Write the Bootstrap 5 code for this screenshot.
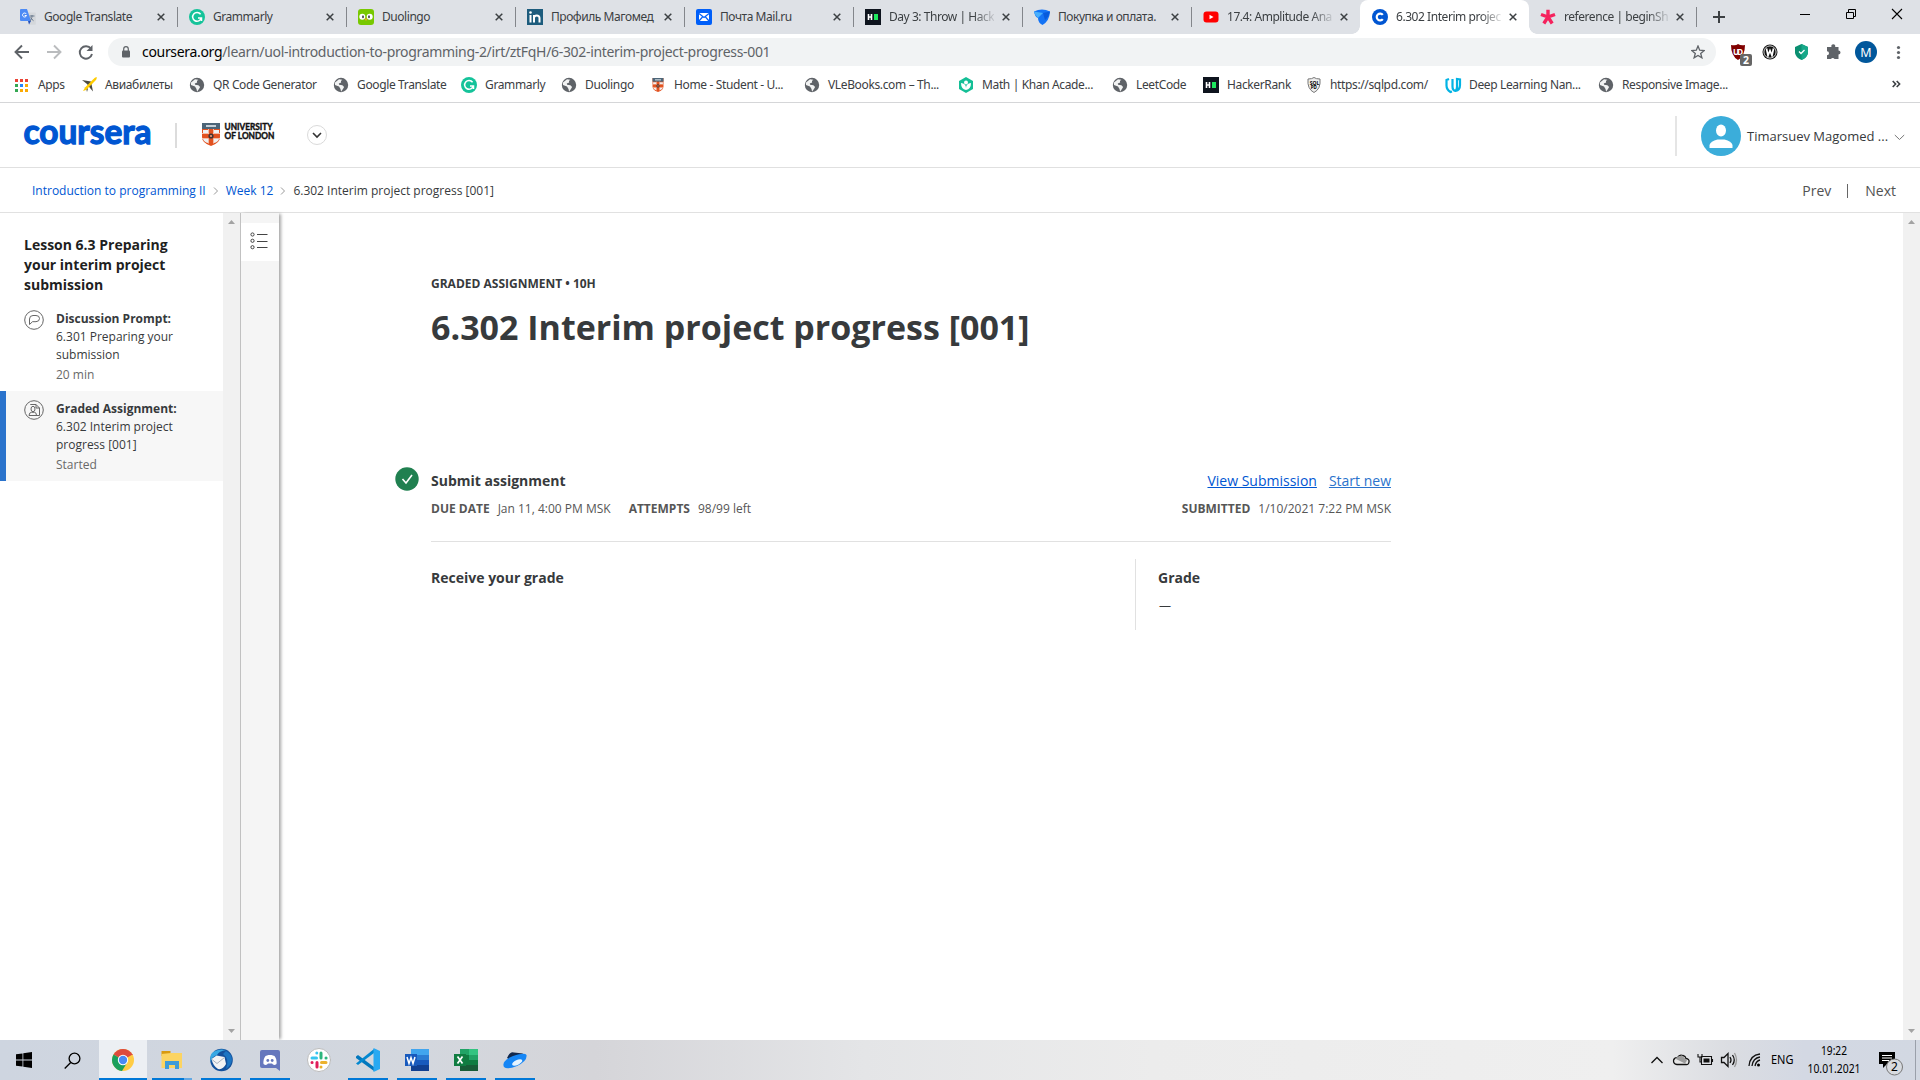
<!DOCTYPE html>
<html lang="en">
<head>
<meta charset="utf-8">
<title>6.302 Interim project progress [001] | Coursera</title>
<link href="https://cdn.jsdelivr.net/npm/bootstrap@5.3.0/dist/css/bootstrap.min.css" rel="stylesheet">
<style>
body{font-family:"Open Sans","Noto Sans",sans-serif;font-size:12px;line-height:18px;color:#373a3c;background:#fff;height:1080px;overflow:hidden}
svg{display:block;flex:none}
a{color:#0056d2}
.chrome-ui{font-family:"Noto Sans","Open Sans",sans-serif;color:#3c4043}
.tabstrip{height:34px;background:#dee1e6;padding-left:8px}
.tab-item{width:169px;height:34px;padding:0 4px 0 12px;position:relative}
.tab-item:nth-of-type(10){width:167px;padding-left:11px}
.tab-item .ttl{margin-left:8px;white-space:nowrap;letter-spacing:-.45px;line-height:34px}
.tab-item .fade-end{-webkit-mask-image:linear-gradient(90deg,#000 80%,rgba(0,0,0,.15) 100%)}
.tab-item:not(.tab-on):not(.no-sep)::after{content:"";position:absolute;right:-1px;top:7px;width:1px;height:20px;background:#83868b}
.tab-on{background:#fff;border-radius:8px 8px 0 0}
.tab-on::before{content:"";position:absolute;bottom:0;left:-8px;right:-8px;height:8px;background:radial-gradient(circle at 0 0,transparent 7.5px,#fff 8px) left/8px 8px no-repeat,radial-gradient(circle at 100% 0,transparent 7.5px,#fff 8px) right/8px 8px no-repeat}
.toolbar{height:36px}
.omni{width:1608px;height:28px;border-radius:14px;background:#f1f3f4;margin-left:13px;padding:0 11px 0 13px;font-size:14px;letter-spacing:-.32px}
.omni-url{margin-left:11px}
.url-rest{color:#5f6368}
.bookbar{height:33px;padding-left:14px;border-bottom:1px solid #d5d6d8}
.bm{height:29px;gap:8px;white-space:nowrap;letter-spacing:-.36px;flex:none}
.bm:nth-child(1){width:67px}.bm:nth-child(2){width:108px}.bm:nth-child(3){width:144px}.bm:nth-child(4){width:128px}
.bm:nth-child(5){width:100px}.bm:nth-child(6){width:89px}.bm:nth-child(7){width:154px}.bm:nth-child(8){width:154px}
.bm:nth-child(9){width:154px}.bm:nth-child(10){width:91px}.bm:nth-child(11){width:103px}.bm:nth-child(12){width:138px}
.bm:nth-child(13){width:154px;gap:7px}.bm:nth-child(14){width:294px}
.more{margin-top:10px}
.site-head{height:65px;border-bottom:1px solid #e0e0e0;padding:0 15px 0 23px}
.uname{width:139px;font-size:13px;white-space:nowrap;padding-top:2px}
.crumbs{height:45px;border-bottom:1px solid #e1e1e1;padding:2px 24px 0 32px}
.crumbs svg{margin:0 7px}
.pn{font-size:14px;color:#525252}
.pn i{width:1px;height:14px;background:#666;margin:0 17px 0 16px}
.work{height:827px}
.side{width:223px;padding-top:22px}
.side h2{font-size:14px;line-height:20px;font-weight:700;color:#1f1f1f;margin:0 40px 6px 24px}
.lesson{height:90px;padding:9px 30px 0 24px;gap:12px}
.lesson.now{background:#f7f7f7;border-left:6px solid #2a73cc;padding-left:18px}
.lesson p{margin:0}
.lesson .meta{color:#696969;margin-top:2px}
.sbar{width:17px;background:#f1f1f1;padding:6px 0}
.rail{width:39px;background:#f5f5f5;border-left:1px solid #c1c1c1;box-shadow:3px 0 3px -1px rgba(0,0,0,.35);padding-top:10px}
.rail-btn{height:38px;background:#fff;padding:0 0 3px 9px}
.page-col{width:960px;margin-left:152px}
.page-col h1{font-size:34px;line-height:40px;font-weight:700;color:#373a3c;margin:14px 0 0;white-space:nowrap}
.cap{font-weight:700;line-height:18px;margin-top:62px}
.step{height:74px;margin-top:120px;margin-left:-36px}
.step-body{padding-top:4px}
.step h3,.grade-row h3{font-size:14px;line-height:20px;font-weight:700;margin:0}
.dim{color:#565656}
.links{gap:12px}
.links a{font-size:14px;line-height:20px}
.links .start-new{color:#2a73cc}
.due{gap:8px;margin-top:9px}
.due-val{margin-right:10px}
.grade-row{border-top:1px solid #e1e1e1}
.grade-row .grade-ttl{padding-top:26px}
.grade-col{width:256px;height:71px;border-left:1px solid #e1e1e1;margin-top:17px;padding:9px 0 0 22px}
.grade-val{margin-top:9px;padding-left:1px;font-size:12px}
.taskbar{height:40px;font-family:"Noto Sans","Open Sans",sans-serif;color:#000;background:linear-gradient(90deg,#ced5e0 0,#d3d7de 22%,#d5d5d9 31%,#e4e5e7 45%,#ececec 60%,#efefef 84%,#dbdde2 90%,#d3d8e3 94%,#d2d8e2 100%)}
.tk{width:49px;height:40px;padding:0 5px 0 4px;position:relative}
.tk.find{padding-right:7px}
.tk.run::after{content:"";position:absolute;left:4px;width:40px;bottom:0;height:2px;background:#0078d7}
.tk.two::after{background:linear-gradient(90deg,#0078d7 32px,#62a8e4 32px)}
.tk.front{background:#eceff3;width:48px;padding:0;margin:0 1px}
.tk.front::after{left:0;width:48px}
</style>
</head>
<body class="d-flex flex-column">
<svg width="0" height="0" class="position-absolute">
<defs>
<symbol id="globe" viewBox="0 0 16 16"><circle cx="8" cy="8" r="7.200" fill="#5f6368"/><path d="M2 5.500 6 2.200l3.200.5-.4 2.500-3 1.200.3 1.400 3.300.5 1.700 1.800-1 1.700-2 3L7.500 12 6 9.500 2 8z" fill="#fff" opacity=".92"/><path d="m8 3.500 4.500-.2L14 7l-3.500.5-2.500-2z" fill="#5f6368"/></symbol>
<symbol id="gram" viewBox="0 0 16 16"><circle cx="8" cy="8" r="8" fill="#15c39a"/><path d="M11.600 5.300A4.400 4.400 0 1 0 12.300 9H9M12.500 8.500v3.500" fill="none" stroke="#fff" stroke-width="1.500"/></symbol>
<symbol id="hrank" viewBox="0 0 16 16"><path d="M0 0h16v16H0z" fill="#0e141e"/><path d="M3.500 5v6M6.500 5v6M3.500 8h3" stroke="#fff" stroke-width="1.600"/><path d="M9 5h4v6H9z" fill="#1ee75e"/></symbol>
<symbol id="crest" viewBox="0 0 18 23"><path d="M0 0h18v14q0 6-9 9-9-3-9-9z" fill="#e2511f"/><path d="M0 0h18v6H0z" fill="#4c6578"/><path d="M4 2h10v2H4z" fill="#c6d0d8"/><path d="M1 7h5v3H1zM12 7h5v3h-5zM1 16h5v4q-4-1-5-4zM17 16h-5v4q4-1 5-4z" fill="#eef1f3"/><path d="M6.500 6v5M11.500 6v5M0 10.500h6.500M11.500 10.500H18M0 15.500h6.500v5M18 15.500h-6.500v5" stroke="#f8d5c8" fill="none" stroke-width=".8"/><circle cx="9" cy="13" r="2.600" fill="#403535"/><circle cx="9" cy="13" r="1.100" fill="#f39c76"/></symbol>
<symbol id="x" viewBox="0 0 8 8"><path d="m.7.7 6.600 6.600M7.300.7.700 7.300" stroke="#3c4043" stroke-width="1.500"/></symbol>
<symbol id="sep" viewBox="0 0 6 8"><path d="m1 .5 3.500 3.500L1 7.500" fill="none" stroke="#999" /></symbol>
</defs></svg>

<header class="chrome-ui">
<div class="tabstrip d-flex">
 <div class="tab-item d-flex align-items-center"><svg width="16" height="16" viewBox="0 0 16 16"><path d="M6 3.500h9q.8 0 .8 1V15q0 .8-.8.8H9z" fill="#d4d7db"/><path d="M1 0h6l4 12H1q-1 0-1-1V1q0-1 1-1z" fill="#4d8bf5"/><path d="m8 12 3 0-2 3.500z" fill="#2450b8"/><path d="M9.500 7h5M12 6v1c0 2-1 4-2 5M10.500 8.500c1 1.500 2 2.500 3 3.200" stroke="#68788c" fill="none"/><path d="M6.300 5A2 2 0 1 0 6.500 6.500H4.700" fill="none" stroke="#fff"/></svg><span class="ttl">Google Translate</span><svg class="ms-auto me-2" width="8" height="8"><use href="#x"/></svg></div>
 <div class="tab-item d-flex align-items-center"><svg width="16" height="16"><use href="#gram"/></svg><span class="ttl">Grammarly</span><svg class="ms-auto me-2" width="8" height="8"><use href="#x"/></svg></div>
 <div class="tab-item d-flex align-items-center"><svg width="16" height="16" viewBox="0 0 16 16"><rect width="16" height="16" rx="3" fill="#78c800"/><circle cx="4.300" cy="7.700" r="3" fill="#fff"/><circle cx="11.700" cy="7.700" r="3" fill="#fff"/><ellipse cx="5" cy="7.700" rx="1" ry="1.500" fill="#4b4b4b"/><ellipse cx="11" cy="7.700" rx="1" ry="1.500" fill="#4b4b4b"/><path d="m6.500 9.500h3L8 12z" fill="#f5a623"/></svg><span class="ttl">Duolingo</span><svg class="ms-auto me-2" width="8" height="8"><use href="#x"/></svg></div>
 <div class="tab-item d-flex align-items-center"><svg width="16" height="16" viewBox="0 0 16 16"><path d="M0 0h16v16H0z" fill="#1d5c7d"/><path d="M3.500 6v7.500M7 13.500V6M7 9c0-3 5.500-3.500 5.500 0v4.500" fill="none" stroke="#fff" stroke-width="2"/><circle cx="3.500" cy="3.500" r="1.300" fill="#fff"/></svg><span class="ttl">Профиль Магомед</span><svg class="ms-auto me-2" width="8" height="8"><use href="#x"/></svg></div>
 <div class="tab-item d-flex align-items-center"><svg width="16" height="16" viewBox="0 0 16 16"><rect width="16" height="16" rx="2" fill="#005ff9"/><rect x="3" y="4" width="10" height="8" fill="#fff"/><path d="m3 4.500 5 4 5-4M3 12l3.500-4M13 12 9.500 8" fill="none" stroke="#005ff9" stroke-width="1.200"/></svg><span class="ttl">Почта Mail.ru</span><svg class="ms-auto me-2" width="8" height="8"><use href="#x"/></svg></div>
 <div class="tab-item d-flex align-items-center"><svg width="16" height="16"><use href="#hrank"/></svg><span class="ttl fade-end">Day 3: Throw | Hack</span><svg class="ms-auto me-2" width="8" height="8"><use href="#x"/></svg></div>
 <div class="tab-item d-flex align-items-center"><svg width="16" height="16" viewBox="0 0 16 16"><path d="M0 2.500Q8-1.500 16 2.500 15.500 12 8.500 16 4 14 4 9 1 8 0 2.500z" fill="#1373f5"/><path d="M0 2.500 9 4 4 9Q1 7 0 2.500z" fill="#4ab0fb"/><path d="m9 4 7-1.500Q15 8 11 11z" fill="#075bdc"/></svg><span class="ttl">Покупка и оплата.</span><svg class="ms-auto me-2" width="8" height="8"><use href="#x"/></svg></div>
 <div class="tab-item no-sep d-flex align-items-center"><svg width="16" height="16" viewBox="0 0 16 16"><rect x=".5" y="2.500" width="15" height="11" rx="3" fill="#f00"/><path d="m6.500 5.700 4 2.300-4 2.300z" fill="#fff"/></svg><span class="ttl fade-end">17.4: Amplitude Ana</span><svg class="ms-auto me-2" width="8" height="8"><use href="#x"/></svg></div>
 <div class="tab-item tab-on d-flex align-items-center"><svg width="16" height="16" viewBox="0 0 16 16"><circle cx="8" cy="8" r="8" fill="#0056d2"/><path d="M10.800 5.900a3.400 3.400 0 1 0 0 4.200" fill="none" stroke="#fff" stroke-width="2.200"/></svg><span class="ttl fade-end">6.302 Interim projec</span><svg class="ms-auto me-2" width="8" height="8"><use href="#x"/></svg></div>
 <div class="tab-item d-flex align-items-center"><svg width="16" height="16" viewBox="0 0 16 16"><path d="M8 8V.8M8 8l7-2.500M8 8l4.200 6.500M8 8l-4.200 6.500M8 8 1 5.500" stroke="#f5225d" stroke-width="3.400"/></svg><span class="ttl fade-end">reference | beginSh</span><svg class="ms-auto me-2" width="8" height="8"><use href="#x"/></svg></div>
 <svg class="ms-auto" width="222" height="34" viewBox="1698 0 222 34" fill="none" stroke="#3c4043"><path d="M1713 17h12M1719 11v12" stroke-width="2"/><path d="M1800 14.500h10" stroke="#000"/><path d="M1846.500 12.500h7v6h-7zM1848.500 12.500v-3h7v7h-2" stroke="#000"/><path d="m1892 9 10 10m0-10-10 10" stroke="#000" stroke-width="1.100"/></svg>
</div>
<div class="toolbar d-flex align-items-center">
 <svg width="95" height="36" viewBox="0 34 95 36" fill="none" stroke-width="1.900"><path d="M29 52H16m6-6.500L15.500 52l6.500 6.500" stroke="#5f6368"/><path d="M47 52h13m-6-6.500 6.500 6.500-6.500 6.500" stroke="#babcbe"/><path d="M91 48.800A6.200 6.200 0 1 0 92 54" stroke="#5f6368"/><path d="M92.500 45v6h-6z" fill="#5f6368"/></svg>
 <div class="omni d-flex align-items-center"><svg width="10" height="13" viewBox="0 0 10 13"><rect x="1" y="4.500" width="8" height="7" rx="1" fill="#5f6368"/><path d="M2.700 5V3a2.300 2.300 0 0 1 4.600 0v2" fill="none" stroke="#5f6368" stroke-width="1.200"/></svg><span class="omni-url"><span class="text-black">coursera.org</span><span class="url-rest">/learn/uol-introduction-to-programming-2/irt/ztFqH/6-302-interim-project-progress-001</span></span>
 <svg class="ms-auto" width="14" height="14" viewBox="0 0 14 14"><path d="m7 1 1.700 4.200 4.500.3-3.500 2.900 1.200 4.400L7 10.400l-3.900 2.400 1.200-4.400L.8 5.500l4.500-.3z" fill="none" stroke="#5f6368" stroke-width="1.300"/></svg></div>
 <svg width="204" height="36" viewBox="1716 34 204 36"><path d="M1731 45q5 1 7-1 3 2 7 1 0 11-7 15-7-4-7-15z" fill="#800000"/><text x="1733" y="54.500" font-size="8" font-weight="700" fill="#fff" textLength="10">UD</text><rect x="1740" y="54" width="12" height="12" rx="2" fill="#666"/><text x="1743" y="64" font-size="10.500" font-weight="700" fill="#fff">2</text><circle cx="1770" cy="52" r="7.500" fill="#111"/><circle cx="1770" cy="52" r="6.100" fill="none" stroke="#fff" stroke-width=".8"/><path d="m1766.500 48.500 1.500 7 2-5 2 5 1.500-7" fill="none" stroke="#fff" stroke-width="1.700"/><path d="m1801.500 44 6.500 3v6q-1 5-6.500 7-5.500-2-6.500-7v-6z" fill="#0b8f71"/><path d="m1801.500 44 6.500 3v6q-1 5-6.500 7z" fill="#17a889"/><path d="m1799 51.500 2 2 3.500-3.500" fill="none" stroke="#fff" stroke-width="1.300"/><path d="M1828 47h3.500a2 2 0 1 1 3.600 0h3.400v3.600a2 2 0 1 1 0 4V59h-4a2 2 0 0 0-3.500 0h-4v-3.800a2 2 0 1 0 0-4V47z" fill="#5f6368"/><circle cx="1866" cy="52" r="11" fill="#01579b"/><text x="1866" y="56.500" font-size="12.500" text-anchor="middle" fill="#fff">M</text><g fill="#5f6368"><circle cx="1898.500" cy="47.500" r="1.600"/><circle cx="1898.500" cy="52.500" r="1.600"/><circle cx="1898.500" cy="57.500" r="1.600"/></g></svg>
</div>
<nav class="bookbar d-flex">
 <div class="bm d-flex align-items-center"><svg width="16" height="16" viewBox="0 0 16 16"><path d="M1 2h3v3H1zM6 2h3v3H6zM11 2h3v3h-3z" fill="#ea4335"/><path d="M1 7h3v3H1zM1 12h3v3H1z" fill="#34a853"/><path d="M6 7h3v3H6z" fill="#2684fc"/><path d="M11 7h3v3h-3zM6 12h3v3H6zM11 12h3v3h-3z" fill="#fbaa05"/></svg>Apps</div>
 <div class="bm d-flex align-items-center"><svg width="16" height="16" viewBox="0 0 16 16"><path d="m1 3 9 1.500 2 10-3-3.500-3-4z" fill="#4a4a42"/><path d="M1 9.500 5 11l1 4 1-3.500z" fill="#4a4a42"/><path d="M15.500 0q1 2-2 4.500L5 13l-3 1 2-3.500 8-8Q14 0 15.500 0z" fill="#fc0"/></svg>Авиабилеты</div>
 <div class="bm d-flex align-items-center"><svg width="16" height="16"><use href="#globe"/></svg>QR Code Generator</div>
 <div class="bm d-flex align-items-center"><svg width="16" height="16"><use href="#globe"/></svg>Google Translate</div>
 <div class="bm d-flex align-items-center"><svg width="16" height="16"><use href="#gram"/></svg>Grammarly</div>
 <div class="bm d-flex align-items-center"><svg width="16" height="16"><use href="#globe"/></svg>Duolingo</div>
 <div class="bm d-flex align-items-center"><svg width="16" height="14"><use href="#crest"/></svg>Home - Student - U...</div>
 <div class="bm d-flex align-items-center"><svg width="16" height="16"><use href="#globe"/></svg>VLeBooks.com – Th...</div>
 <div class="bm d-flex align-items-center"><svg width="16" height="16" viewBox="0 0 16 16"><path d="m8 0 7 4v8l-7 4-7-4V4z" fill="#14bf96"/><circle cx="8" cy="5.500" r="2" fill="#fff"/><path d="M3 6q5 .5 5 5 0-4.500 5-5 0 6-5 7-5-1-5-7z" fill="#fff"/></svg>Math | Khan Acade...</div>
 <div class="bm d-flex align-items-center"><svg width="16" height="16"><use href="#globe"/></svg>LeetCode</div>
 <div class="bm d-flex align-items-center"><svg width="16" height="16"><use href="#hrank"/></svg>HackerRank</div>
 <div class="bm d-flex align-items-center"><svg width="16" height="16" viewBox="0 0 16 16"><path d="M2 2q4 0 6-1.500Q10 2 14 2q1 10-6 13.500Q1 12 2 2z" fill="#eee" stroke="#777"/><text x="3.700" y="7.500" font-size="5" font-weight="700" letter-spacing="0">SQL</text><text x="4.700" y="12" font-size="4.500" font-weight="700" letter-spacing="0">PD</text></svg>https://sqlpd.com/</div>
 <div class="bm d-flex align-items-center"><svg width="18" height="18" viewBox="0 0 18 18" fill="none" stroke="#02b3e4" stroke-width="2.200"><path d="M5 3 2.500 4v5.500q0 4 4 6.500l1.500-.5M8.500 3v7.500q0 4 3 4.500 4.500-1 4.500-6V3.500L13 3v8q0 3-2 4"/></svg>Deep Learning Nan...</div>
 <div class="bm d-flex align-items-center"><svg width="16" height="16"><use href="#globe"/></svg>Responsive Image...</div>
 <svg class="more" width="9" height="8" viewBox="0 0 9 8" fill="none" stroke="#3c4043" stroke-width="1.600"><path d="M.7 1 3.600 4 .7 7M4.700 1l2.900 3-2.900 3"/></svg>
</nav>
</header>

<div class="site-head d-flex align-items-center">
 <svg width="320" height="64" viewBox="23 103 320 64"><text x="23.500" y="144" font-family="Lato" font-weight="700" font-size="35" fill="#0056d2" stroke="#0056d2" stroke-width="1.300" textLength="128" lengthAdjust="spacingAndGlyphs">coursera</text><path d="M176 123v25" stroke="#dcdcdc" stroke-width="2"/><use href="#crest" x="202" y="123" width="18" height="23"/><g font-family="Lato" font-weight="700" font-size="8.500" fill="#111" stroke="#111" stroke-width=".4"><text x="224.500" y="130" textLength="48" lengthAdjust="spacingAndGlyphs">UNIVERSITY</text><text x="224.500" y="139" textLength="50" lengthAdjust="spacingAndGlyphs">OF LONDON</text></g><circle cx="317" cy="135" r="9.500" fill="#fff" stroke="#dadada"/><path d="m313 133 4 4 4-4" fill="none" stroke="#333" stroke-width="1.600"/></svg>
 <div class="ms-auto d-flex align-items-center">
  <svg width="72" height="64" viewBox="1675 103 72 64"><path d="M1676 116v40" stroke="#dcdcdc" stroke-width="1.500"/><circle cx="1721" cy="136" r="20" fill="#3badda"/><ellipse cx="1721" cy="130.500" rx="5" ry="6" fill="#fff"/><path d="M1709.500 148v-3q1-4 8-5.500h7q7 1.500 8 5.500v3z" fill="#fff"/></svg>
  <span class="uname">Timarsuev Magomed ...</span>
  <svg class="ms-2 mt-1" width="11" height="7" viewBox="0 0 11 7"><path d="m.8 1 4.700 4.500L10.200 1" fill="none" stroke="#777"/></svg>
 </div>
</div>
<nav class="crumbs d-flex align-items-center">
 <a class="text-decoration-none" href="#">Introduction to programming II</a><svg width="6" height="8"><use href="#sep"/></svg>
 <a class="text-decoration-none" href="#">Week 12</a><svg width="6" height="8"><use href="#sep"/></svg><span>6.302 Interim project progress [001]</span>
 <div class="ms-auto d-flex align-items-center pn"><span>Prev</span><i></i><span>Next</span></div>
</nav>

<div class="work d-flex">
 <aside class="side">
  <h2>Lesson 6.3 Preparing your interim project submission</h2>
  <div class="lesson d-flex"><svg width="20" height="20" viewBox="0 0 20 20" fill="none" stroke="#666"><circle cx="10" cy="10" r="9.300"/><path d="M5.500 14.500V9q0-3.500 3.500-3.500h3q3.500 0 3.500 3t-3.500 3.200H8.500z"/></svg><div><p class="fw-bold">Discussion Prompt:</p><p>6.301 Preparing your submission</p><p class="meta">20 min</p></div></div>
  <div class="lesson now d-flex"><svg width="20" height="20" viewBox="0 0 20 20" fill="none" stroke="#666"><circle cx="10" cy="10" r="9.300"/><path d="M6.500 5V4.500H12l3.500 3.500v7.500H12M12 4.500V8h3.500"/><ellipse cx="9" cy="9" rx="2" ry="2.700"/><path d="M5 15.500q0-3 2.500-3.200h3q2 .2 2 3.200z"/></svg><div><p class="fw-bold">Graded Assignment:</p><p>6.302 Interim project progress [001]</p><p class="meta">Started</p></div></div>
 </aside>
 <div class="sbar d-flex flex-column justify-content-between align-items-center"><svg width="7" height="6"><path d="M0 5h7L3.500 1z" fill="#a3a3a3"/></svg><svg width="7" height="6"><path d="M0 1h7L3.500 5z" fill="#a3a3a3"/></svg></div>
 <div class="rail"><div class="rail-btn d-flex align-items-center"><svg width="18" height="18" viewBox="0 0 18 18" fill="none" stroke="#444"><circle cx="2.500" cy="2.500" r="1.600"/><circle cx="2.500" cy="8.800" r="1.600"/><circle cx="2.500" cy="15.200" r="1.600"/><path d="M7 2.500h10.500M7 9.500h10.500M7 15.500h10.500"/></svg></div></div>
 <main class="page-col">
  <div class="cap">GRADED ASSIGNMENT • 10H</div>
  <h1>6.302 Interim project progress [001]</h1>
  <section class="step d-flex">
   <svg width="36" height="24" viewBox="0 0 36 24"><circle cx="12" cy="12" r="11.700" fill="#208050"/><path d="m7.500 12 3.500 4 6-8" fill="none" stroke="#fff" stroke-width="1.600"/></svg>
   <div class="step-body flex-grow-1">
    <div class="d-flex justify-content-between"><h3>Submit assignment</h3><div class="links d-flex"><a href="#">View Submission</a><a class="start-new" href="#">Start new</a></div></div>
    <div class="d-flex dim due"><b>DUE DATE</b><span class="due-val">Jan 11, 4:00 PM MSK</span><b>ATTEMPTS</b><span>98/99 left</span><b class="ms-auto">SUBMITTED</b><span>1/10/2021 7:22 PM MSK</span></div>
   </div>
  </section>
  <section class="grade-row d-flex justify-content-between">
   <h3 class="grade-ttl">Receive your grade</h3>
   <div class="grade-col"><h3>Grade</h3><div class="grade-val">—</div></div>
  </section>
 </main>
 <div class="sbar ms-auto d-flex flex-column justify-content-between align-items-center"><svg width="7" height="6"><path d="M0 5h7L3.500 1z" fill="#a3a3a3"/></svg><svg width="7" height="6"><path d="M0 1h7L3.500 5z" fill="#a3a3a3"/></svg></div>
</div>

<footer class="taskbar d-flex">
 <div class="tk d-flex align-items-center justify-content-center"><svg width="16" height="16" viewBox="0 0 16 16"><path d="m0 2.300 6.500-.9v6.200H0zM7.300 1.300 16 0v7.600H7.300zM0 8.400h6.500v6.200L0 13.700zM7.300 8.400H16V16l-8.700-1.300z"/></svg></div>
 <div class="tk find d-flex align-items-center justify-content-center"><svg width="17" height="17" viewBox="0 0 17 17" fill="none" stroke="#000" stroke-width="1.300"><circle cx="10.500" cy="6.500" r="5.400"/><path d="M6.700 10.500.7 16.500"/></svg></div>
 <div class="tk run front d-flex align-items-center justify-content-center"><svg width="22" height="22" viewBox="0 0 22 22"><circle cx="11" cy="11" r="11" fill="#fc4"/><path d="M11 11 1.500 5.500a11 11 0 0 1 19 0z" fill="#dd4b3e"/><path d="M11 11 1.500 5.500A11 11 0 0 0 10 22l5.500-9z" fill="#1a9f5c"/><path d="M11 5.500h9.500" stroke="#dd4b3e"/><circle cx="11" cy="11" r="5.200" fill="#fff"/><circle cx="11" cy="11" r="4.200" fill="#4a8af4"/></svg></div>
 <div class="tk run two d-flex align-items-center justify-content-center"><svg width="22" height="20" viewBox="0 0 22 20"><path d="M.5 1h9v5h-9z" fill="#d99a10"/><path d="M.5 4 10 3h11v15H.5z" fill="#fcd462"/><path d="M4 19v-8h14v8h-4v-4H8v4z" fill="#3d9bd9"/></svg></div>
 <div class="tk run d-flex align-items-center justify-content-center"><svg width="24" height="24" viewBox="0 0 24 24"><circle cx="12.500" cy="12" r="11.300" fill="#14519c"/><path d="M3 5q6-5 14-3-7 1-9 5Q2 9 2 14 0 9 3 5z" fill="#38a8e4"/><path d="m2.500 11 5-3.500 8 1.500 1.500 7q-3 6-8 5-5-3-6.500-10z" fill="#f3f3f4"/><path d="m3 11.500 5 4 7.500-6" fill="none" stroke="#a9b3bf"/><path d="M17 3q6 3 6 9-1 6-6 9 4-10-3-15z" fill="#1c75c3"/></svg></div>
 <div class="tk run d-flex align-items-center justify-content-center"><svg width="20" height="21" viewBox="0 0 20 21"><path d="M2 0h16q2 0 2 2v19l-4-3H2q-2 0-2-2V2q0-2 2-2z" fill="#6577bd"/><path d="M3.500 14Q3 9 5.500 6l3-1h3l3 1q2.500 3 2 8-2 1.500-3.500.5L12 13.500H8l-1 1q-1.500 1-3.500-.5z" fill="#fff"/><circle cx="7.800" cy="10.500" r="1.400" fill="#6577bd"/><circle cx="12.200" cy="10.500" r="1.400" fill="#6577bd"/></svg></div>
 <div class="tk d-flex align-items-center justify-content-center"><svg width="24" height="24" viewBox="0 0 24 24" fill="none" stroke-width="3" stroke-linecap="round"><circle cx="12" cy="12" r="11.500" fill="#fff" stroke="#bbb" stroke-width="1"/><path d="M5 10h4.500M9.800 5v.1" stroke="#36c5f0"/><path d="M14 5v5M19 10h.1" stroke="#2eb67d"/><path d="M14.500 14.500H19M14 19v-.1" stroke="#ecb22e"/><path d="M10 14.500V19M5 14.500h.1" stroke="#e01e5a"/></svg></div>
 <div class="tk run d-flex align-items-center justify-content-center"><svg width="24" height="24" viewBox="0 0 24 24"><path d="M0 8.500 2 7l16 12v4L0 10z" fill="#0277bd"/><path d="M0 15.500 2 17 18 5V1z" fill="#0288d1"/><path d="m17.500 0 6.500 3v18l-6.500 3z" fill="#29a9f2"/></svg></div>
 <div class="tk run d-flex align-items-center justify-content-center"><svg width="24" height="22" viewBox="0 0 24 22"><path d="M6 0h18v6H6z" fill="#41a5ee"/><path d="M6 6h18v5H6z" fill="#2b7cd3"/><path d="M6 11h18v5H6z" fill="#185abd"/><path d="M6 16h18v6H6z" fill="#103f91"/><path d="M0 5h12v12H0z" fill="#185abd"/><path d="m2 8 2 6.500L6 8.500l2 6L10 8" fill="none" stroke="#fff" stroke-width="1.500"/></svg></div>
 <div class="tk run d-flex align-items-center justify-content-center"><svg width="24" height="22" viewBox="0 0 24 22"><path d="M6 0h9v6H6z" fill="#21a366"/><path d="M15 0h9v6h-9z" fill="#33c481"/><path d="M6 6h9v10H6z" fill="#107c41"/><path d="M15 6h9v5h-9z" fill="#21a366"/><path d="M15 11h9v5h-9z" fill="#107c41"/><path d="M6 16h18v6H6z" fill="#185c37"/><path d="M0 5h12v12H0z" fill="#107c41"/><path d="m3.500 7.500 5 7m0-7-5 7" stroke="#fff" stroke-width="1.700"/></svg></div>
 <div class="tk run d-flex align-items-center justify-content-center"><svg width="24" height="17" viewBox="0 0 24 17"><path d="M4 6Q7-1 11 .5l9 1-8 9z" fill="#12284c"/><path d="M1 15Q-2 9 10 4q12-4 13.500-1 1 6-9.500 11-10 4-13 1z" fill="#1686f5"/><ellipse cx="14" cy="10.500" rx="5.500" ry="2.400" transform="rotate(-25 14 10)" fill="#e6f4ff"/></svg></div>
 <svg class="ms-auto" width="270" height="40" viewBox="1650 1040 270 40"><g fill="none" stroke="#111" stroke-width="1.300"><path d="m1651.500 1063 5.500-5.500 5.500 5.500"/><path d="M1677 1064.500q-3.500-.5-3.500-3.500t4-3.500q2-3.500 5.500-2 2.500.5 3 3 3.500.5 3 3.500t-3 2.500z" fill="#e6e6e6" /><path d="m1675 1058.500 10 5 2-3-5-5-4 1z" fill="#9b9b9b" stroke="none"/><path d="M1701.500 1056.500h10v8h-10zM1712.500 1059v3M1698 1054v3h4v-3M1700 1057v5h2" stroke-width="1.100"/><path d="M1703.500 1058.500h6v4h-6z" fill="#111" stroke="none"/><path d="M1721.500 1057.500h2.500l4-4v13l-4-4h-2.500zM1730 1057q2 3 0 6M1732.500 1055q3.500 5 0 10"/><path d="M1734.500 1053q4 7 0 14" stroke="#999"/><path d="M1749 1066q1-11 11-12M1752 1066q1-8 8-9M1755 1066q1-5 5-6"/></g><circle cx="1758.500" cy="1065" r="1.500"/><g font-size="12"><text x="1771" y="1064" textLength="22.500" lengthAdjust="spacingAndGlyphs">ENG</text><text x="1821" y="1055" textLength="26" lengthAdjust="spacingAndGlyphs">19:22</text><text x="1807.500" y="1073" textLength="53" lengthAdjust="spacingAndGlyphs">10.01.2021</text></g><path d="M1879 1052h16v12h-8l-4 4v-4h-4z"/><path d="M1882 1055.500h10M1882 1058h10M1882 1060.500h7" stroke="#fff"/><circle cx="1894.500" cy="1067" r="8" fill="#d8dbe0" stroke="#777"/><text x="1891" y="1071" font-size="12">2</text><path d="M1915.500 1040v40" stroke="#9aa0aa"/></svg>
</footer>
<script src="https://cdn.jsdelivr.net/npm/bootstrap@5.3.0/dist/js/bootstrap.bundle.min.js"></script>
</body>
</html>
